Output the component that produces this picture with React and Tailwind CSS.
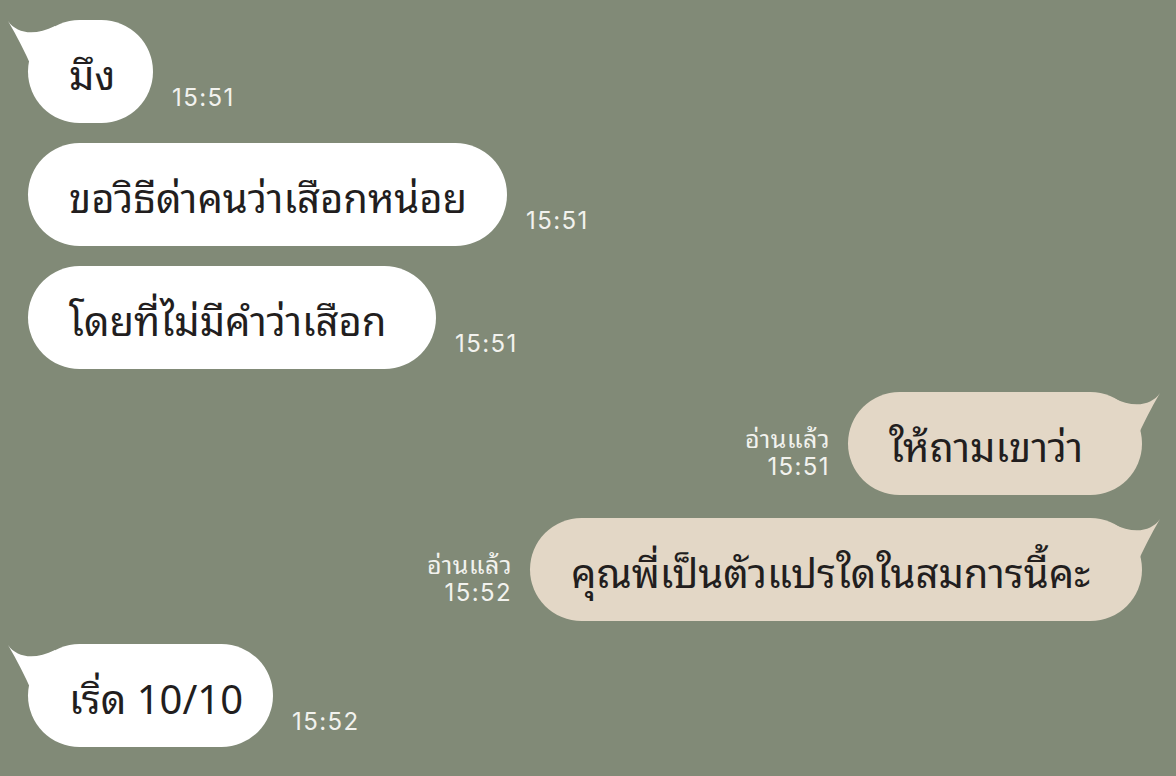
import React from "react";

function TailLeft() {
  return (
    <svg className="absolute left-[-21px] top-0 fill-white" width="50" height="50" viewBox="0 0 50 50">
      <path d="M1,1 C10,14 28,16 48,6 L48,48 L25,48 C18,32 10,16 1,1 Z" />
    </svg>
  );
}

function TailRight() {
  return (
    <svg className="absolute right-[-19px] top-0 fill-[#e3d7c6]" width="50" height="50" viewBox="0 0 50 50">
      <path d="M49,1 C40,14 22,16 2,6 L2,48 L25,48 C32,32 40,16 49,1 Z" />
    </svg>
  );
}

function Incoming({ text, time, width, tail, mt }) {
  return (
    <div className={`flex items-end pl-[28px] ${mt}`}>
      <div className={`relative h-[103px] ${width} rounded-full bg-white flex items-center pl-[41px]`}>
        {tail && <TailLeft />}
        <span className="relative text-[40px] text-[#221e1e] whitespace-nowrap leading-none">{text}</span>
      </div>
      <div className="ml-[19px] mb-[13px] font-['Inter',sans-serif] text-[24px] tracking-[1.4px] text-[#f2f2ee] leading-none">
        {time}
      </div>
    </div>
  );
}

function Outgoing({ text, time, width, mt }) {
  return (
    <div className={`flex items-end justify-end pr-[34px] ${mt}`}>
      <div className="mr-[18px] mb-[13px] flex flex-col items-end text-[#f2f2ee]">
        <span className="text-[25px] leading-[30px] tracking-[0.5px]">อ่านแล้ว</span>
        <span className="font-['Inter',sans-serif] text-[24px] tracking-[1.4px] leading-[30px]">{time}</span>
      </div>
      <div className={`relative h-[103px] ${width} rounded-full bg-[#e3d7c6] flex items-center pl-[41px]`}>
        <TailRight />
        <span className="relative text-[40px] text-[#221e1e] whitespace-nowrap leading-none">{text}</span>
      </div>
    </div>
  );
}

export default function App() {
  return (
    <div className="w-[1176px] h-[776px] bg-[#818a77] overflow-hidden pt-[20px] font-['Noto_Sans_Thai_Looped','Noto_Sans_Thai',sans-serif]">
      <Incoming text="มึง" time="15:51" width="w-[125px]" tail mt="" />
      <Incoming text="ขอวิธีด่าคนว่าเสือกหน่อย" time="15:51" width="w-[479px]" mt="mt-[20px]" />
      <Incoming text="โดยที่ไม่มีคำว่าเสือก" time="15:51" width="w-[408px]" mt="mt-[20px]" />
      <Outgoing text="ให้ถามเขาว่า" time="15:51" width="w-[294px]" mt="mt-[23px]" />
      <Outgoing text="คุณพี่เป็นตัวแปรใดในสมการนี้คะ" time="15:52" width="w-[612px]" mt="mt-[23px]" />
      <Incoming text="เริ่ด 10/10" time="15:52" width="w-[245px]" tail mt="mt-[23px]" />
    </div>
  );
}
